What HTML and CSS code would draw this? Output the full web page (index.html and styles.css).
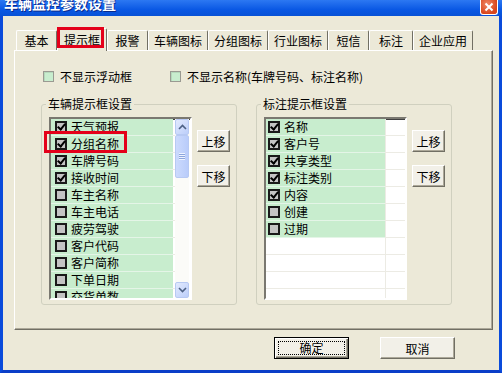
FILE: index.html
```html
<!DOCTYPE html>
<html>
<head>
    <meta charset="utf-8">
    <link rel="stylesheet" href="styles.css">
</head>
<body>
    <div class="window">
        <div class="titlebar">
            <span class="title">车辆监控参数设置</span>
            <span class="close">
                <svg width="10" height="10" viewBox="0 0 10 10"><path d="M1.5 1.5L8.5 8.5M8.5 1.5L1.5 8.5" stroke="#fff" stroke-width="2" fill="none"/></svg>
            </span>
        </div>
        <div class="frame">
            <div class="tabs">
                <div class="tab">基本</div>
                <div class="tab active">提示框<span class="mark mark-tab"></span></div>
                <div class="tab">报警</div>
                <div class="tab">车辆图标</div>
                <div class="tab">分组图标</div>
                <div class="tab">行业图标</div>
                <div class="tab">短信</div>
                <div class="tab wide">标注</div>
                <div class="tab">企业应用</div>
            </div>
            <div class="panel">
                <div class="options">
                    <label class="opt first"><span class="box"></span>不显示浮动框</label>
                    <label class="opt"><span class="box"></span>不显示名称(车牌号码、标注名称)</label>
                </div>
                <div class="groups">
                    <fieldset class="group">
                        <legend>车辆提示框设置</legend>
                        <div class="group-body">
                            <div class="listbox">
                                <div class="rows left">
                                    <div class="row"><span class="cell"><span class="chk on"></span>天气预报</span><span class="cell2"></span></div>
                                    <div class="row"><span class="cell"><span class="chk on"></span>分组名称</span><span class="cell2"></span></div>
                                    <div class="row"><span class="cell"><span class="chk on"></span>车牌号码</span><span class="cell2"></span></div>
                                    <div class="row"><span class="cell"><span class="chk on"></span>接收时间</span><span class="cell2"></span></div>
                                    <div class="row"><span class="cell"><span class="chk"></span>车主名称</span><span class="cell2"></span></div>
                                    <div class="row"><span class="cell"><span class="chk"></span>车主电话</span><span class="cell2"></span></div>
                                    <div class="row"><span class="cell"><span class="chk"></span>疲劳驾驶</span><span class="cell2"></span></div>
                                    <div class="row"><span class="cell"><span class="chk"></span>客户代码</span><span class="cell2"></span></div>
                                    <div class="row"><span class="cell"><span class="chk"></span>客户简称</span><span class="cell2"></span></div>
                                    <div class="row"><span class="cell"><span class="chk"></span>下单日期</span><span class="cell2"></span></div>
                                    <div class="row"><span class="cell"><span class="chk"></span>交货单数</span><span class="cell2"></span></div>
                                </div>
                                <div class="scrollbar">
                                    <span class="sb-btn">
                                        <svg width="9" height="6" viewBox="0 0 9 6"><path d="M1 5L4.5 1.5L8 5" stroke="#4D6185" stroke-width="1.6" fill="none"/></svg>
                                    </span>
                                    <span class="sb-thumb"><span class="grip"></span></span>
                                    <span class="sb-track"></span>
                                    <span class="sb-btn">
                                        <svg width="9" height="6" viewBox="0 0 9 6"><path d="M1 1L4.5 4.5L8 1" stroke="#4D6185" stroke-width="1.6" fill="none"/></svg>
                                    </span>
                                </div>
                            </div>
                            <div class="moves">
                                <button class="move">上移</button>
                                <button class="move">下移</button>
                            </div>
                            <span class="mark mark-row"></span>
                        </div>
                    </fieldset>
                    <fieldset class="group">
                        <legend>标注提示框设置</legend>
                        <div class="group-body">
                            <div class="listbox">
                                <div class="rows right">
                                    <div class="row"><span class="cell"><span class="chk on"></span>名称</span><span class="cell2"></span></div>
                                    <div class="row"><span class="cell"><span class="chk on"></span>客户号</span><span class="cell2"></span></div>
                                    <div class="row"><span class="cell"><span class="chk on"></span>共享类型</span><span class="cell2"></span></div>
                                    <div class="row"><span class="cell"><span class="chk on"></span>标注类别</span><span class="cell2"></span></div>
                                    <div class="row"><span class="cell"><span class="chk on"></span>内容</span><span class="cell2"></span></div>
                                    <div class="row"><span class="cell"><span class="chk"></span>创建</span><span class="cell2"></span></div>
                                    <div class="row"><span class="cell"><span class="chk"></span>过期</span><span class="cell2"></span></div>
                                    <div class="row"><span class="cell empty"></span><span class="cell2"></span></div>
                                    <div class="row"><span class="cell empty"></span><span class="cell2"></span></div>
                                    <div class="row"><span class="cell empty"></span><span class="cell2"></span></div>
                                    <div class="row"><span class="cell empty"></span><span class="cell2"></span></div>
                                </div>
                            </div>
                            <div class="moves">
                                <button class="move">上移</button>
                                <button class="move">下移</button>
                            </div>
                        </div>
                    </fieldset>
                </div>
            </div>
            <div class="actions">
                <button class="btn default"><span class="focus">确定</span></button>
                <button class="btn">取消</button>
            </div>
        </div>
    </div>
</body>
</html>
```
FILE: styles.css
```css
body {
    margin: 0;
    background-color: #ECE9D8;
    font-family: "Noto Sans CJK SC", "DejaVu Sans", sans-serif;
    font-size: 12px;
    color: #000;
}
.window {
    width: 502px;
    height: 373px;
    display: flex;
    flex-direction: column;
}
.titlebar {
    height: 16px;
    display: flex;
    justify-content: space-between;
    align-items: flex-start;
    background: linear-gradient(#2C78F2, #0A58E4 60%, #0852D6);
    overflow: hidden;
}
.title {
    color: white;
    font-weight: bold;
    font-size: 14px;
    line-height: 14px;
    margin: -4px 0 0 4px;
    text-shadow: 1px 1px #0A2A8A;
}
.close {
    width: 16px;
    height: 14px;
    margin-right: 4px;
    border: 1px solid white;
    border-top: 0;
    border-radius: 0 0 3px 3px;
    background: radial-gradient(circle at 40% 30%, #F08A68, #D8461C 70%);
    display: flex;
    align-items: center;
    justify-content: center;
}
.frame {
    flex: 1;
    border-left: 3px solid #0A4BDB;
    border-right: 3px solid #0A4BDB;
    border-bottom: 3px solid #0A3EC8;
    padding: 12px 6px 0 11px;
}
.tabs {
    display: flex;
    align-items: flex-end;
    margin-left: 2px;
    height: 22px;
}
.tab {
    position: relative;
    height: 20px;
    line-height: 19px;
    min-width: 41px;
    box-sizing: border-box;
    padding: 0 5px;
    text-align: center;
    border-top: 1px solid #fff;
    border-left: 1px solid #fff;
    border-right: 1px solid #716F64;
    border-radius: 2px 2px 0 0;
}
.tab.wide {
    min-width: 44px;
}
.tab.active {
    height: 23px;
    line-height: 21px;
    padding: 0 6px;
    margin-bottom: -1px;
    background-color: #ECE9D8;
    z-index: 1;
}
.mark {
    position: absolute;
    border: 3px solid #E4001A;
    box-sizing: border-box;
}
.mark-tab {
    left: -1px;
    top: -2px;
    width: 47px;
    height: 21px;
}
.panel {
    width: 479px;
    height: 280px;
    box-sizing: border-box;
    border: 1px solid;
    border-color: #fff #716F64 #716F64 #fff;
    box-shadow: inset -1px -1px #ACA899;
    padding: 19px 0 0 26px;
}
.options {
    display: flex;
    margin-left: 2px;
    height: 13px;
}
.opt {
    display: flex;
    align-items: center;
    gap: 6px;
    line-height: 13px;
}
.opt.first {
    width: 127px;
}
.box {
    width: 11px;
    height: 11px;
    box-sizing: border-box;
    border: 1px solid #9A9A92;
    background-color: #C8EDCE;
    box-shadow: inset 1px 1px #B5D8BB;
}
.groups {
    display: flex;
    gap: 19px;
    margin-top: 14px;
}
.group {
    width: 196px;
    min-width: 0;
    box-sizing: border-box;
    margin: 0;
    padding: 6px 0 4px 7px;
    border: 1px solid #D0D0BF;
    border-radius: 3px;
}
.group legend {
    padding: 0 2px;
    margin-left: -3px;
    line-height: 14px;
}
.group-body {
    position: relative;
    display: flex;
    align-items: flex-start;
    gap: 5px;
}
.mark-row {
    left: -5px;
    top: 14px;
    width: 83px;
    height: 22px;
}
.listbox {
    width: 143px;
    height: 183px;
    box-sizing: border-box;
    border: 2px solid;
    border-color: #7A7870 #FFFFFF #FFFFFF #7A7870;
    box-shadow: inset 1px 1px #404040;
    background-color: white;
    display: flex;
    overflow: hidden;
}
.rows {
    flex: 1;
}
.row {
    display: flex;
    height: 17px;
}
.cell {
    width: 122px;
    box-sizing: border-box;
    display: flex;
    align-items: center;
    gap: 4px;
    padding-left: 4px;
    background-color: #C8EDCE;
    border-bottom: 1px solid #E4F5E7;
    line-height: 16px;
    white-space: nowrap;
}
.rows.right .cell {
    width: 119px;
    padding-left: 2px;
}
.cell.empty {
    background-color: white;
    border-bottom-color: #ECEBE4;
}
.cell2 {
    flex: 1;
    border-left: 1px solid #ECEBE4;
    border-bottom: 1px solid #ECEBE4;
}
.rows.left .cell2 {
    border-left: 0;
}
.chk {
    position: relative;
    width: 12px;
    height: 12px;
    box-sizing: border-box;
    border: 2px solid #1A1A1A;
    background-color: #C4C4C4;
    flex: none;
}
.chk.on::after {
    content: "";
    position: absolute;
    left: 2px;
    top: -1px;
    width: 3px;
    height: 6px;
    border: solid #000;
    border-width: 0 2px 2px 0;
    transform: rotate(40deg);
}
.scrollbar {
    width: 14px;
    margin-right: 1px;
    display: flex;
    flex-direction: column;
    background-color: #FBFBF8;
}
.sb-btn {
    height: 16px;
    box-sizing: border-box;
    border: 1px solid #B7C9F3;
    border-radius: 2px;
    background: linear-gradient(135deg, #E2EAFE, #BCCEFA);
    display: flex;
    align-items: center;
    justify-content: center;
}
.sb-thumb {
    height: 43px;
    box-sizing: border-box;
    border: 1px solid #B7C9F3;
    border-radius: 2px;
    background: linear-gradient(90deg, #CCDAFD, #B9CCFA);
    display: flex;
    align-items: center;
    justify-content: center;
}
.grip {
    width: 6px;
    height: 7px;
    background: repeating-linear-gradient(#EEF3FF 0 1px, #8CA5DC 1px 2px);
}
.sb-track {
    flex: 1;
}
.moves {
    display: flex;
    flex-direction: column;
    gap: 13px;
    margin-top: 13px;
}
.move,
.btn {
    font-family: "Noto Sans CJK SC", "DejaVu Sans", sans-serif;
    font-size: 12px;
    padding: 0;
    background-color: #F2F0E8;
    border: 1px solid;
    border-color: #fff #716F64 #716F64 #fff;
    box-shadow: inset -1px -1px #ACA899;
}
.move {
    width: 33px;
    height: 22px;
}
.actions {
    display: flex;
    justify-content: flex-end;
    gap: 31px;
    margin-top: 7px;
    margin-right: 38px;
}
.btn {
    width: 75px;
    height: 22px;
}
.btn.default {
    border: 1px solid #000;
    box-shadow: inset 1px 1px #fff, inset -1px -1px #716F64, inset -2px -2px #ACA899;
    padding: 3px;
}
.focus {
    display: block;
    height: 100%;
    box-sizing: border-box;
    border: 1px dotted #000;
    line-height: 12px;
}
```
